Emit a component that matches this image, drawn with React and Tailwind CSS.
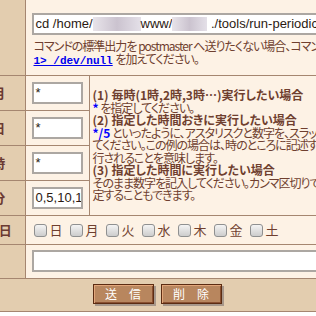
import React from 'react';

const line = 'border-[#a58670]';
const labelCell = `bg-[#e3cdaf] border-r border-b ${line} text-center align-middle font-bold text-[13px] text-[#6b3a32]`;
const valueCell = `bg-[#fdf2e5] border-r border-b ${line} pl-[6px] pr-[6px] py-[6px]`;

const Field = ({ children, className = '' }) => (
    <div className={`h-[22px] border-2 border-[#aca7a2] bg-white flex items-center pl-[2px] text-[13px] text-[#2b1a12] font-['Liberation_Sans',sans-serif] whitespace-pre overflow-hidden ${className}`}>
        {children}
    </div>
);

const Blur = ({ w }) => (
    <span className={`inline-block shrink-0 h-[14px] ${w} bg-linear-to-r from-[#e8e4ea] via-[#cbc3cf] to-[#e4e0e8]`}></span>
);

const Check = ({ day }) => (
    <label className="flex items-center gap-[3px]">
        <span className="inline-block w-[13px] h-[13px] rounded-[3px] border border-[#8f9090] bg-linear-to-b from-[#f4f4f4] to-[#cdcdcd]"></span>
        <span className="text-[13px] leading-[14px]">{day}</span>
    </label>
);

const Btn = ({ children }) => (
    <button className="w-[61px] h-[20px] bg-[#b8865e] border border-[#5c2c12] shadow-[inset_1px_1px_0_#e2a67a,inset_-1px_-1px_0_#8a5030,2px_2px_0_#a7978a] text-white text-[12px] leading-none">
        {children}
    </button>
);

export default function App() {
    return (
        <div className="w-[316px] h-[316px] overflow-hidden bg-white font-['Noto_Sans_CJK_JP',sans-serif] text-[#6f3f2f] [font-feature-settings:'palt']">
            <table className="-ml-[27px] w-[368px] border-collapse table-fixed">
                <colgroup>
                    <col className="w-[52px]" />
                    <col className="w-[64px]" />
                    <col />
                </colgroup>
                <tbody>
                    {/* // Command */}
                    <tr>
                        <td className={labelCell}></td>
                        <td colSpan={2} className={`bg-[#fdf2e5] border-b ${line} pl-[6px] pt-[13px] pb-[8px]`}>
                            <Field className="w-[340px]">
                                <span>cd /home/</span><Blur w="w-[48px]" /><span>www/</span><Blur w="w-[35px]" /><span> ./tools/run-periodic/run-periodic.sh</span>
                            </Field>
                            <div className="mt-[5px] pl-[2px] text-[12px] leading-[12.5px] whitespace-nowrap overflow-hidden">
                                <span className="tracking-[-1px]">コマンドの標準出力を postmaster へ送りたくない場合、コマンドの最後に</span><br />
                                <a className="text-[#0000ee] font-bold underline font-['Liberation_Mono',monospace] text-[11px]">1&gt; /dev/null</a> <span className="tracking-[-1px]">を加えてください。</span>
                            </div>
                        </td>
                    </tr>
                    {/* // Month */}
                    <tr>
                        <td className={labelCell}>月</td>
                        <td className={valueCell}><Field className="w-[51px]">*</Field></td>
                        <td rowSpan={4} className={`bg-[#fdf2e5] border-b ${line} pl-[3px] align-middle text-[12px] leading-[12.5px] whitespace-nowrap overflow-hidden tracking-[-1px]`}>
                            <b className="tracking-normal">(1) 毎時(1時,2時,3時…)実行したい場合</b><br />
                            <b className="tracking-normal text-[#0000ff]">*</b> を指定してください。<br />
                            <b className="tracking-normal">(2) 指定した時間おきに実行したい場合</b><br />
                            <b className="tracking-normal text-[#0000ff]">*/5</b> といったように、アスタリスクと数字を、スラッシュで区切って記述し<br />
                            てください。この例の場合は、時のところに記述すると5時間おきに実<br />
                            行されることを意味します。<br />
                            <b className="tracking-normal">(3) 指定した時間に実行したい場合</b><br />
                            そのまま数字を記入してください。カンマ区切りで複数の時間を指<br />
                            定することもできます。
                        </td>
                    </tr>
                    {/* // Day */}
                    <tr>
                        <td className={labelCell}>日</td>
                        <td className={valueCell}><Field className="w-[51px]">*</Field></td>
                    </tr>
                    {/* // Hour */}
                    <tr>
                        <td className={labelCell}>時</td>
                        <td className={valueCell}><Field className="w-[51px]">*</Field></td>
                    </tr>
                    {/* // Minute */}
                    <tr>
                        <td className={labelCell}>分</td>
                        <td className={valueCell}><Field className="w-[51px]">0,5,10,15,20</Field></td>
                    </tr>
                    {/* // Weekday */}
                    <tr>
                        <td className={labelCell}>曜日</td>
                        <td colSpan={2} className={`bg-[#fdf2e5] border-b ${line} pl-[8px] py-[7px]`}>
                            <div className="flex gap-[7px]">
                                {['日', '月', '火', '水', '木', '金', '土'].map((d) => <Check key={d} day={d} />)}
                            </div>
                        </td>
                    </tr>
                    {/* // Memo */}
                    <tr>
                        <td className={labelCell}></td>
                        <td colSpan={2} className={`bg-[#fdf2e5] border-b ${line} pl-[6px] pt-[5px] pb-[6px]`}>
                            <Field className="w-[330px]"></Field>
                        </td>
                    </tr>
                    {/* // Buttons */}
                    <tr>
                        <td colSpan={3} className={`bg-[#e3cdaf] border-b ${line} text-center pt-[5px] pb-[7px]`}>
                            <div className="flex justify-center gap-[7px]">
                                <Btn>送　信</Btn>
                                <Btn>削　除</Btn>
                            </div>
                        </td>
                    </tr>
                </tbody>
            </table>
        </div>
    );
}
